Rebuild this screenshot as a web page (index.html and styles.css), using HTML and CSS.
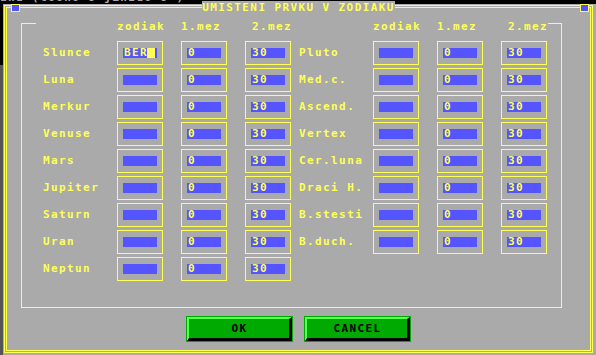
FILE: index.html
```html
<!DOCTYPE html>
<html>
<head>
  <title>Umisteni prvku v zodiaku</title>
  <link rel="stylesheet" href="styles.css">
</head>
<body>
  <div class="screen">
    <div class="top-strip"><div class="top-text">ana (tooho 8 jinzdo 8 )</div></div>
    <div class="side-strip"></div>

    <div class="window">
      <div class="window-border">
        <span class="corner-box corner-left"></span>
        <div class="title"><span>UMISTENI PRVKU V ZODIAKU</span></div>
        <span class="corner-box corner-right"></span>

        <div class="frame">
          <div class="frame-top"><span></span><span></span></div>
          <div class="groups">
            <!-- left group -->
            <div class="group">
              <div></div><div class="head">zodiak</div><div class="head">1.mez</div><div class="head head-last">2.mez</div>

              <div class="label">Slunce</div>
              <div class="cell"><div class="field">BER<span class="cursor"></span></div></div>
              <div class="cell"><div class="field">0</div></div>
              <div class="cell"><div class="field">30</div></div>

              <div class="label">Luna</div>
              <div class="cell"><div class="field"></div></div>
              <div class="cell"><div class="field">0</div></div>
              <div class="cell"><div class="field">30</div></div>

              <div class="label">Merkur</div>
              <div class="cell"><div class="field"></div></div>
              <div class="cell"><div class="field">0</div></div>
              <div class="cell"><div class="field">30</div></div>

              <div class="label">Venuse</div>
              <div class="cell"><div class="field"></div></div>
              <div class="cell"><div class="field">0</div></div>
              <div class="cell"><div class="field">30</div></div>

              <div class="label">Mars</div>
              <div class="cell"><div class="field"></div></div>
              <div class="cell"><div class="field">0</div></div>
              <div class="cell"><div class="field">30</div></div>

              <div class="label">Jupiter</div>
              <div class="cell"><div class="field"></div></div>
              <div class="cell"><div class="field">0</div></div>
              <div class="cell"><div class="field">30</div></div>

              <div class="label">Saturn</div>
              <div class="cell"><div class="field"></div></div>
              <div class="cell"><div class="field">0</div></div>
              <div class="cell"><div class="field">30</div></div>

              <div class="label">Uran</div>
              <div class="cell"><div class="field"></div></div>
              <div class="cell"><div class="field">0</div></div>
              <div class="cell"><div class="field">30</div></div>

              <div class="label">Neptun</div>
              <div class="cell"><div class="field"></div></div>
              <div class="cell"><div class="field">0</div></div>
              <div class="cell"><div class="field">30</div></div>
            </div>

            <!-- right group -->
            <div class="group">
              <div></div><div class="head">zodiak</div><div class="head">1.mez</div><div class="head head-last">2.mez</div>

              <div class="label">Pluto</div>
              <div class="cell"><div class="field"></div></div>
              <div class="cell"><div class="field">0</div></div>
              <div class="cell"><div class="field">30</div></div>

              <div class="label">Med.c.</div>
              <div class="cell"><div class="field"></div></div>
              <div class="cell"><div class="field">0</div></div>
              <div class="cell"><div class="field">30</div></div>

              <div class="label">Ascend.</div>
              <div class="cell"><div class="field"></div></div>
              <div class="cell"><div class="field">0</div></div>
              <div class="cell"><div class="field">30</div></div>

              <div class="label">Vertex</div>
              <div class="cell"><div class="field"></div></div>
              <div class="cell"><div class="field">0</div></div>
              <div class="cell"><div class="field">30</div></div>

              <div class="label">Cer.luna</div>
              <div class="cell"><div class="field"></div></div>
              <div class="cell"><div class="field">0</div></div>
              <div class="cell"><div class="field">30</div></div>

              <div class="label">Draci H.</div>
              <div class="cell"><div class="field"></div></div>
              <div class="cell"><div class="field">0</div></div>
              <div class="cell"><div class="field">30</div></div>

              <div class="label">B.stesti</div>
              <div class="cell"><div class="field"></div></div>
              <div class="cell"><div class="field">0</div></div>
              <div class="cell"><div class="field">30</div></div>

              <div class="label">B.duch.</div>
              <div class="cell"><div class="field"></div></div>
              <div class="cell"><div class="field">0</div></div>
              <div class="cell"><div class="field">30</div></div>
            </div>
          </div>
        </div>

        <div class="buttons">
          <button class="btn">OK</button>
          <button class="btn">CANCEL</button>
        </div>
      </div>
    </div>
  </div>
</body>
</html>
```

FILE: styles.css
```css
body {
  margin: 0;
  background-color: #000;
  font-family: "DejaVu Sans Mono", monospace;
  font-weight: bold;
  font-size: 11px;
  letter-spacing: 1.4px;
  color: #ffff55;
}

.screen {
  display: grid;
  grid-template-columns: 3px 593px;
  grid-template-rows: 4px 351px;
  overflow: hidden;
}

.top-strip {
  grid-column: 1 / 3;
  overflow: hidden;
  background-color: #000;
}

.top-text {
  margin-top: -7px;
  line-height: 10px;
  color: #aaaaaa;
  white-space: pre;
}

.side-strip {
  background: linear-gradient(#000 0 61px, #555555 61px);
}

.window {
  background-color: #aaaaaa;
  padding: 1px 3px 2px 1px;
}

.window-border {
  position: relative;
  height: 100%;
  box-sizing: border-box;
  border: 3px double #ffff55;
}

.corner-box {
  position: absolute;
  top: -4px;
  width: 9px;
  height: 8px;
  box-sizing: border-box;
  border: 1px solid #ffff55;
  background-color: #5555ff;
}

.corner-left {
  left: 4px;
}

.corner-right {
  right: 1px;
}

.title {
  position: absolute;
  top: -5px;
  left: 0;
  right: 0;
  text-align: center;
  line-height: 10px;
}

.title span {
  background-color: #aaaaaa;
}

.frame {
  width: 541px;
  height: 285px;
  box-sizing: border-box;
  margin: 15px 0 0 14px;
  border: 1px solid #ffff55;
  border-top: none;
}

.frame-top {
  display: flex;
  justify-content: space-between;
  height: 1px;
}

.frame-top span {
  width: 14px;
  background-color: #ffff55;
}

.frame-top span:last-child {
  width: 13px;
}

.groups {
  display: flex;
  gap: 8px;
  padding-left: 21px;
}

.group {
  display: grid;
  grid-template-columns: 56px 46px 46px 46px;
  grid-template-rows: 14px;
  grid-auto-rows: 24px;
  column-gap: 18px;
  row-gap: 3px;
  align-content: start;
}

.head {
  line-height: 5px;
  white-space: nowrap;
}

.head-last {
  padding-left: 7px;
}

.label {
  align-self: center;
  line-height: 12px;
  white-space: nowrap;
}

.cell {
  box-sizing: border-box;
  border: 1px solid #ffff55;
  padding: 6px 5px;
}

.field {
  height: 10px;
  line-height: 10px;
  padding-left: 1px;
  background-color: #5555ff;
  white-space: nowrap;
}

.cursor {
  display: inline-block;
  width: 8px;
  height: 10px;
  vertical-align: top;
  margin-left: -1px;
  background-color: #ffff55;
}

.buttons {
  display: flex;
  justify-content: center;
  gap: 13px;
  margin-top: 9px;
}

.btn {
  width: 105px;
  height: 24px;
  box-sizing: border-box;
  padding: 0;
  margin: 0;
  border-style: solid;
  border-width: 2px 3px 3px 2px;
  border-color: #55ff55 #000 #000 #55ff55;
  outline: 1px solid #00aa00;
  background-color: #00aa00;
  color: #000;
  font-family: "DejaVu Sans Mono", monospace;
  font-weight: bold;
  font-size: 11px;
  letter-spacing: 1.4px;
  line-height: 10px;
  text-indent: 1px;
}
```
